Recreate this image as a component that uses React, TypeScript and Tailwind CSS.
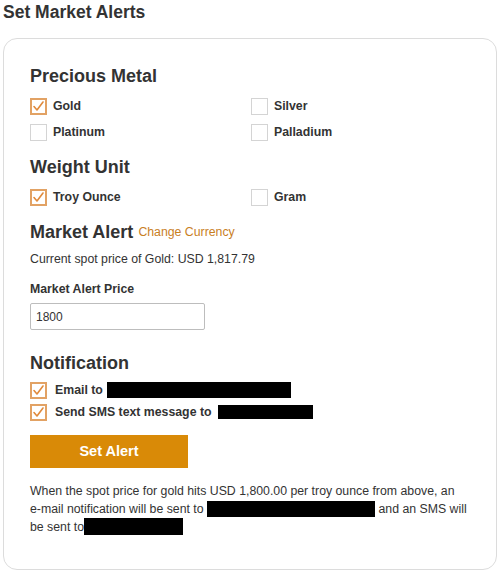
import React from "react";

function Box({ checked }: { checked?: boolean }) {
  return checked ? (
    <span className="flex h-[17px] w-[17px] shrink-0 items-center justify-center border-2 border-[#e2a264] bg-white">
      <svg width="13" height="13" viewBox="0 0 13 13" fill="none">
        <path d="M2 6.5 L5 10 L11 2" stroke="#e08a3c" strokeWidth="1.6" strokeLinecap="round" strokeLinejoin="round" />
      </svg>
    </span>
  ) : (
    <span className="h-[17px] w-[17px] shrink-0 border border-[#d4d4d4] bg-white" />
  );
}

function Check({ label, checked }: { label: string; checked?: boolean }) {
  return (
    <div className="flex h-[26px] items-center gap-[6px]">
      <Box checked={checked} />
      <span className="text-[12.3px] font-bold text-[#333]">{label}</span>
    </div>
  );
}

function Heading({ children, className = "" }: { children: React.ReactNode; className?: string }) {
  return (
    <div className={"flex h-[22px] items-center text-[18px] font-bold leading-[22px] text-[#333] " + className}>
      {children}
    </div>
  );
}

export default function App() {
  return (
    <div className="min-h-[579px] bg-white" style={{ fontFamily: '"Liberation Sans", Arial, sans-serif' }}>
      <div className="pl-[3px] pt-[2px] text-[17.5px] font-bold leading-[20px] text-[#333]">Set Market Alerts</div>
      <div className="mx-[3px] mt-[16px] rounded-[14px] border border-[#dcdcdc] pb-[33px] pl-[26px] pr-[20px] pt-[26px]">
        <Heading>Precious Metal</Heading>
        <div className="mt-[6px] grid grid-cols-[221px_1fr]">
          <Check label="Gold" checked />
          <Check label="Silver" />
          <Check label="Platinum" />
          <Check label="Palladium" />
        </div>
        <Heading className="mt-[11px]">Weight Unit</Heading>
        <div className="mt-[6px] grid grid-cols-[221px_1fr]">
          <Check label="Troy Ounce" checked />
          <Check label="Gram" />
        </div>
        <Heading className="mt-[11px]">
          Market Alert
          <span className="ml-[5px] text-[12.3px] font-normal text-[#c9801f]">Change Currency</span>
        </Heading>
        <div className="mt-[7px] text-[12.3px] leading-[18px] text-[#333]">Current spot price of Gold: USD 1,817.79</div>
        <div className="mt-[12px] text-[12.3px] font-bold leading-[18px] text-[#333]">Market Alert Price</div>
        <div className="mt-[5px] flex h-[27px] w-[175px] items-center rounded-[2px] border border-[#bdbdbd] px-[5px] text-[12px] text-[#333]">
          1800
        </div>
        <Heading className="mt-[22px]">Notification</Heading>
        <div className="mt-[5px] flex h-[22px] items-center gap-[8px]">
          <Box checked />
          <span className="text-[12.3px] font-bold text-[#333]">Email to</span>
          <span className="ml-[-4px] h-[16px] w-[184px] bg-black" />
        </div>
        <div className="flex h-[22px] items-center gap-[8px]">
          <Box checked />
          <span className="text-[12.3px] font-bold text-[#333]">Send SMS text message to</span>
          <span className="ml-[-2px] h-[14px] w-[95px] bg-black" />
        </div>
        <button className="mt-[12px] flex h-[33px] w-[158px] items-center justify-center bg-[#d98a07] text-[14.5px] font-bold text-white">
          Set Alert
        </button>
        <p className="mt-[14px] whitespace-nowrap text-[12.3px] leading-[18px] text-[#333]">
          When the spot price for gold hits USD 1,800.00 per troy ounce from above, an
          <br />
          e-mail notification will be sent to{" "}
          <span className="inline-block h-[16px] w-[168px] bg-black align-[-4px]" /> and an SMS will
          <br />
          be sent to
          <span className="inline-block h-[17px] w-[99px] bg-black align-[-4px]" />
        </p>
      </div>
    </div>
  );
}
